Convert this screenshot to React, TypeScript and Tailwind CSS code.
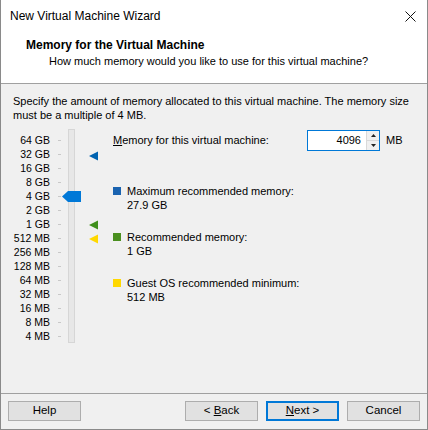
import React from 'react';

const sizes = ['64 GB', '32 GB', '16 GB', '8 GB', '4 GB', '2 GB', '1 GB', '512 MB', '256 MB', '128 MB', '64 MB', '32 MB', '16 MB', '8 MB', '4 MB'];

function Marker({ color, top }: { color: string; top: number }) {
  return (
    <svg width="10" height="10" viewBox="0 0 10 10" className="absolute left-[88px]" style={{ top }}>
      <path d="M0 5 L9 0.5 L9 9.5 Z" fill={color} />
    </svg>
  );
}

function Legend({ color, label, value }: { color: string; label: string; value: string }) {
  return (
    <div className="flex gap-[6px]">
      <div className={`w-[8px] h-[8px] mt-[3px] ${color}`}></div>
      <div className="leading-[14px]">
        <div>{label}</div>
        <div>{value}</div>
      </div>
    </div>
  );
}

function Button({ children, primary }: { children: React.ReactNode; primary?: boolean }) {
  return (
    <button
      className={`w-[73px] h-[20px] bg-[#e1e1e1] text-[11.5px] leading-none ${primary ? 'border-2 border-[#0078d7]' : 'border border-[#adadad]'}`}
    >
      {children}
    </button>
  );
}

export default function App() {
  return (
    <div
      className="w-[428px] h-[430px] flex flex-col border-x border-b border-[#8a8a8a] text-[11px] text-black bg-[#f0f0f0]"
      style={{ fontFamily: '"Liberation Sans", Arial, sans-serif' }}
    >
      {/* Title bar */}
      <div className="h-[32px] bg-white flex items-center justify-between pl-[9px] pr-[11px] text-[12px]">
        <span>New Virtual Machine Wizard</span>
        <svg width="11" height="11" viewBox="0 0 11 11">
          <path d="M0.5 0.5 L10.5 10.5 M10.5 0.5 L0.5 10.5" stroke="#111" strokeWidth="1" />
        </svg>
      </div>

      {/* Header */}
      <div className="h-[52px] bg-white border-b border-[#a0a0a0] pl-[25px] pt-[5px] leading-[16px]">
        <div className="font-bold text-[12px]">Memory for the Virtual Machine</div>
        <div className="pl-[23px]">How much memory would you like to use for this virtual machine?</div>
      </div>

      {/* Body */}
      <div className="flex-1 px-[12px] pt-[10px]">
        <p className="leading-[14px] w-[412px]">
          Specify the amount of memory allocated to this virtual machine. The memory size must be a multiple of 4 MB.
        </p>

        <div className="flex mt-[7px]">
          {/* Slider */}
          <div className="relative w-[112px] h-[218px] -ml-[12px] shrink-0">
            <div className="absolute left-0 top-[4px] w-[49px] text-right text-[10.5px]">
              {sizes.map(s => (
                <div key={s} className="h-[14px] leading-[14px]">{s}</div>
              ))}
            </div>
            <div className="absolute left-[57px] top-[4px] flex flex-col">
              {sizes.map(s => (
                <div key={s} className="h-[14px] flex items-center">
                  <div className="w-[3px] h-px bg-[#c8c8c8]"></div>
                </div>
              ))}
            </div>
            {/* Track */}
            <div className="absolute left-[67px] top-0 w-[7px] h-[214px] bg-[#e7e7e7] border border-[#d6d6d6]"></div>
            {/* Thumb */}
            <svg width="20" height="11" viewBox="0 0 20 11" className="absolute left-[61px] top-[62px]">
              <path d="M0 5.5 L6 0 L19 0 L19 11 L6 11 Z" fill="#0078d7" />
            </svg>
            <Marker color="#0063b1" top={22} />
            <Marker color="#3f8f1c" top={91} />
            <Marker color="#ffd800" top={105} />
          </div>

          {/* Right column */}
          <div className="flex-1">
            <div className="flex items-center h-[22px]">
              <span className="w-[194px]"><u>M</u>emory for this virtual machine:</span>
              <div className="flex h-[21px] w-[73px] border border-[#0078d7] bg-white">
                <div className="flex-1 text-right pr-[5px] leading-[19px]">4096</div>
                <div className="w-[13px] flex flex-col border-l border-[#d9d9d9] bg-[#f0f0f0]">
                  <div className="flex-1 flex items-center justify-center border-b border-[#d9d9d9]">
                    <svg width="5" height="3" viewBox="0 0 5 3"><path d="M0 3 L2.5 0 L5 3 Z" fill="#222" /></svg>
                  </div>
                  <div className="flex-1 flex items-center justify-center">
                    <svg width="5" height="3" viewBox="0 0 5 3"><path d="M0 0 L2.5 3 L5 0 Z" fill="#222" /></svg>
                  </div>
                </div>
              </div>
              <span className="ml-[6px]">MB</span>
            </div>

            <div className="mt-[33px] flex flex-col gap-[18px]">
              <Legend color="bg-[#1a63b0]" label="Maximum recommended memory:" value="27.9 GB" />
              <Legend color="bg-[#4a8f1f]" label="Recommended memory:" value="1 GB" />
              <Legend color="bg-[#ffd800]" label="Guest OS recommended minimum:" value="512 MB" />
            </div>
          </div>
        </div>
      </div>

      {/* Footer */}
      <div className="h-[36px] border-t border-[#a0a0a0] flex items-center px-[7px] pb-[2px]">
        <Button>Help</Button>
        <div className="flex-1"></div>
        <div className="flex gap-[8px]">
          <Button>&lt; <u>B</u>ack</Button>
          <Button primary><u>N</u>ext &gt;</Button>
          <Button>Cancel</Button>
        </div>
      </div>
    </div>
  );
}
